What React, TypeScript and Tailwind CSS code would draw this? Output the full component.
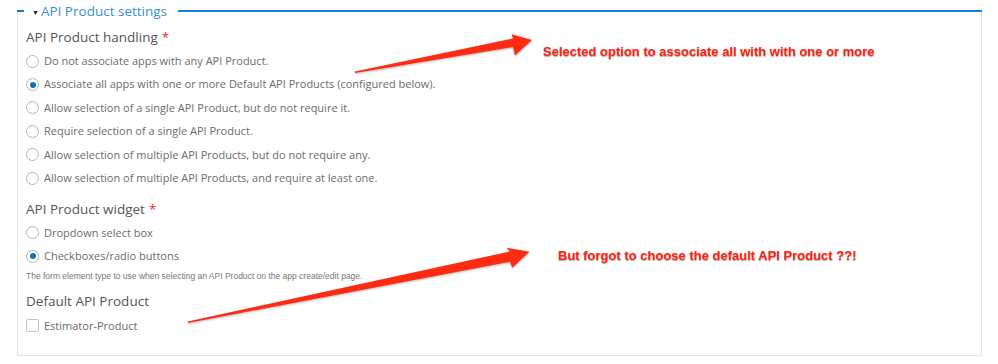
import React from "react";

const radiosA = [
  { label: "Do not associate apps with any API Product.", checked: false },
  { label: "Associate all apps with one or more Default API Products (configured below).", checked: true },
  { label: "Allow selection of a single API Product, but do not require it.", checked: false },
  { label: "Require selection of a single API Product.", checked: false },
  { label: "Allow selection of multiple API Products, but do not require any.", checked: false },
  { label: "Allow selection of multiple API Products, and require at least one.", checked: false },
];

const radiosB = [
  { label: "Dropdown select box", checked: false },
  { label: "Checkboxes/radio buttons", checked: true },
];

function Radio({ label, checked }: { label: string; checked: boolean }) {
  return (
    <div className="flex items-center h-[23.4px]">
      <span className="w-[13px] h-[13px] rounded-full border border-[#b5b5b5] bg-white flex items-center justify-center shrink-0">
        {checked && <span className="w-[6px] h-[6px] rounded-full bg-[#0b72c3]" />}
      </span>
      <span className="ml-[5px] text-[11px] text-[#6b6b6b] whitespace-nowrap">{label}</span>
    </div>
  );
}

function Heading({ text, required }: { text: string; required?: boolean }) {
  return (
    <div className="h-[22px] leading-[22px] text-[13.5px] text-[#555555] whitespace-nowrap">
      {text}
      {required && <span className="text-[#e0302a] ml-[4px]">*</span>}
    </div>
  );
}

export default function App() {
  return (
    <div className="relative w-[998px] h-[364px] bg-white overflow-hidden [font-family:'Open_Sans',sans-serif]">
      <div className="pl-[17px] pr-[16px]">
        <div className="flex items-center h-[22px]">
          <div className="w-[7px] h-[2px] bg-[#1b7ccb]" />
          <div className="ml-[8px] flex items-center">
            <span className="text-[7px] text-[#222] leading-none mt-[2px]">▼</span>
            <span className="ml-[2px] text-[13.5px] leading-[22px] text-[#3a8fd2] whitespace-nowrap">API Product settings</span>
          </div>
          <div className="ml-[11px] flex-1 h-[2px] bg-[#1b7ccb]" />
        </div>
        <div className="-mt-[11px] h-[345px] border-x border-b border-[#e4e4e4] pt-[15px] px-[8px]">
          <Heading text="API Product handling" required />
          <div className="mt-[1.5px]">
            {radiosA.map((r) => (
              <Radio key={r.label} label={r.label} checked={r.checked} />
            ))}
          </div>
          <div className="mt-[8px]">
            <Heading text="API Product widget" required />
          </div>
          <div className="mt-[1.3px]">
            {radiosB.map((r) => (
              <Radio key={r.label} label={r.label} checked={r.checked} />
            ))}
          </div>
          <div className="mt-[2px] h-[12px] leading-[12px] text-[8.5px] text-[#777] whitespace-nowrap [font-family:'Liberation_Sans',Arial,sans-serif]">
            The form element type to use when selecting an API Product on the app create/edit page.
          </div>
          <div className="mt-[8px]">
            <Heading text="Default API Product" />
          </div>
          <div className="mt-[2.3px] flex items-center h-[23.4px]">
            <span className="w-[13px] h-[13px] rounded-[2px] border border-[#c4c4c4] bg-white shrink-0" />
            <span className="ml-[5px] text-[11px] text-[#6b6b6b] whitespace-nowrap">Estimator-Product</span>
          </div>
        </div>
      </div>

      <svg
        className="absolute inset-0 pointer-events-none drop-shadow-[0_1px_1px_rgba(0,0,0,0.3)]"
        width="998"
        height="364"
        viewBox="0 0 998 364"
      >
        <polygon
          fill="#ff2a12"
          points="355,71.5 513,38.5 511.7,34.3 532,40 515,55.5 513,47 355,73"
        />
        <polygon
          fill="#ff2a12"
          points="188,321.5 510,251.5 506.7,247.7 529.5,251.7 512.3,267.7 510,261.7 188,323"
        />
      </svg>

      <div className="absolute left-[543px] top-[44px] leading-[16px] text-[13px] font-bold text-[#ff2412] whitespace-nowrap [font-family:'Liberation_Sans',Arial,sans-serif] [text-shadow:0_1px_1px_rgba(0,0,0,0.35)]">
        Selected option to associate all with with one or more
      </div>
      <div className="absolute left-[558px] top-[248px] leading-[16px] text-[13px] font-bold text-[#ff2412] whitespace-nowrap [font-family:'Liberation_Sans',Arial,sans-serif] [text-shadow:0_1px_1px_rgba(0,0,0,0.35)]">
        But forgot to choose the default API Product ??!
      </div>
    </div>
  );
}
